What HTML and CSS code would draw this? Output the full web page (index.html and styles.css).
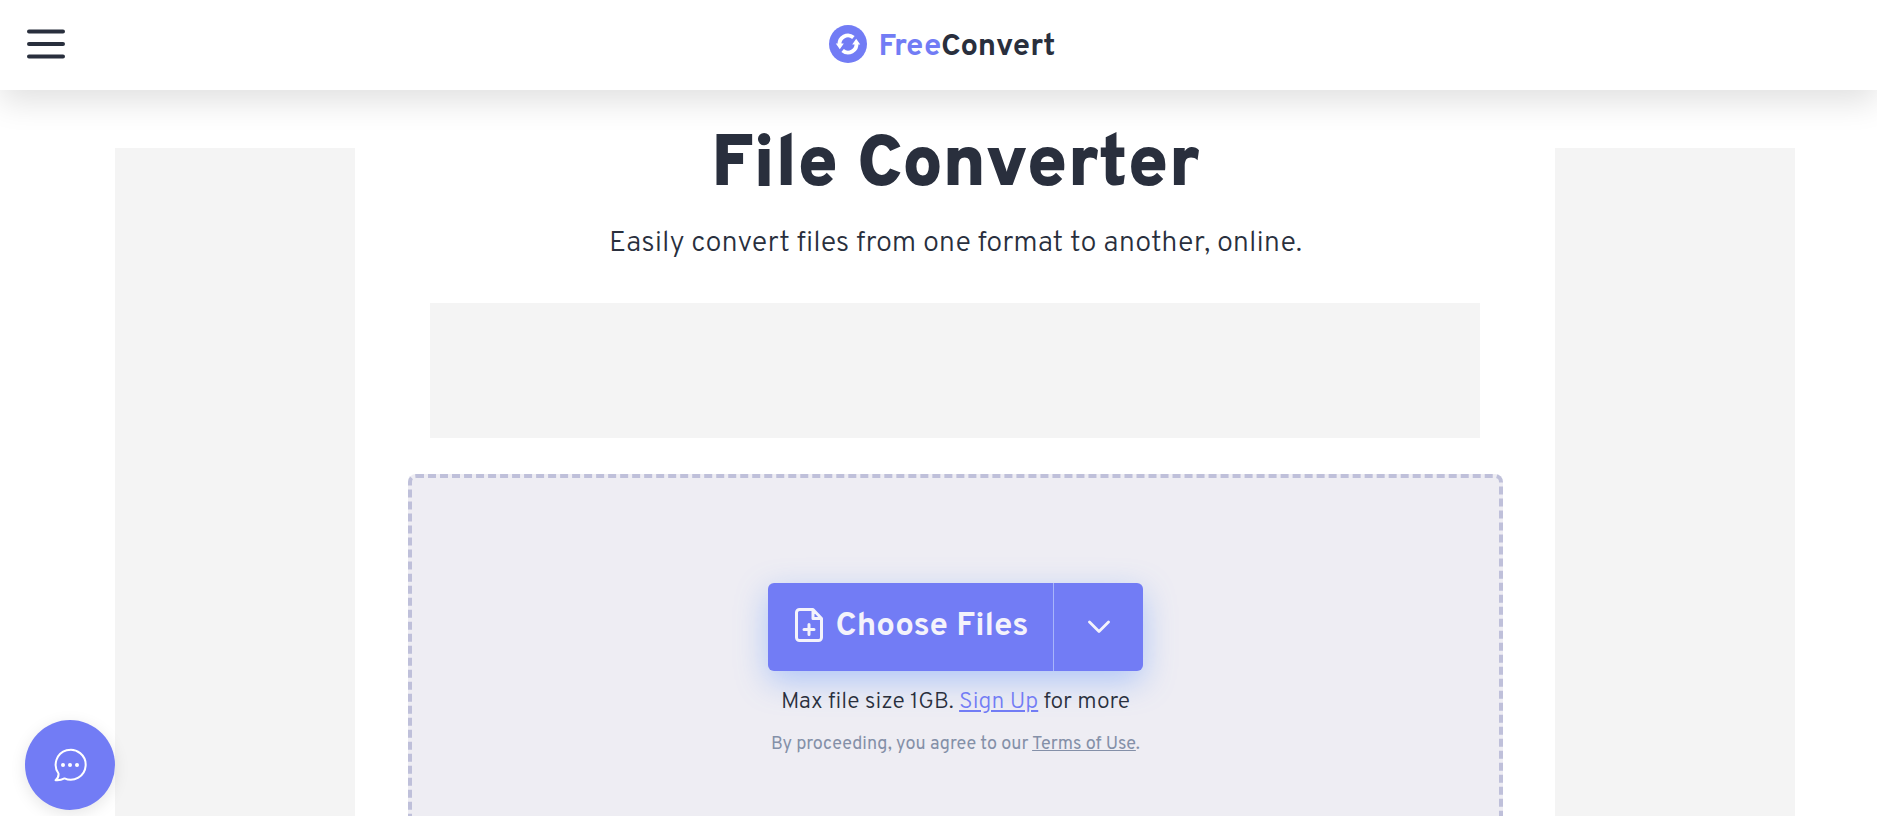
FILE: index.html
```html
<!DOCTYPE html>
<html lang="en">
<head>
<meta charset="utf-8">
<meta name="viewport" content="width=device-width, initial-scale=1">
<title>File Converter</title>
<link rel="stylesheet" href="styles.css">
</head>
<body>
<header class="header">
  <button class="menu" type="button" aria-label="Menu">
    <svg width="38" height="32" viewBox="0 0 38 32" fill="none" stroke="currentColor" stroke-width="4" stroke-linecap="round"><path d="M2 3.500h34M2 16h34M2 28.500h34"/></svg>
  </button>
  <a class="logo" href="#">
    <svg width="38" height="38" viewBox="0 0 38 38"><circle cx="19" cy="19" r="19" fill="#727cf5"/><g fill="none" stroke="#fff" stroke-width="3.800"><path d="M10.600 20A8.400 8.400 0 0 1 24.400 12.500"/><path d="M27.400 18A8.400 8.400 0 0 1 13.600 25.500"/></g><path fill="#fff" d="M6.800 18.600h8l-4 5.600zM31.200 19.400h-8l4-5.600z"/></svg>
    <span class="brand"><span class="brand-free">Free</span>Convert</span>
  </a>
</header>
<main class="page">
  <aside class="side-ad"></aside>
  <section class="content">
    <h1 class="title">File Converter</h1>
    <p class="subtitle">Easily convert files from one format to another, online.</p>
    <div class="banner-ad"></div>
    <div class="dropzone">
      <div class="picker">
        <button class="choose" type="button">
          <svg width="28" height="34" viewBox="0 0 28 34" fill="none" stroke="currentColor" stroke-width="3" stroke-linecap="round" stroke-linejoin="round"><path d="M18 1.500H4.500a3 3 0 0 0-3 3v25a3 3 0 0 0 3 3h19a3 3 0 0 0 3-3V10.500zM18 1.500v9h8.500M14 16.500v10M9 21.500h10"/></svg>
          <span class="choose-label">Choose Files</span>
        </button>
        <button class="more" type="button" aria-label="More sources">
          <svg width="22" height="14" viewBox="0 0 22 14" fill="none" stroke="currentColor" stroke-width="2.800" stroke-linecap="round" stroke-linejoin="round"><path d="M1.500 2l9.500 9.500L20.500 2"/></svg>
        </button>
      </div>
      <p class="limit">Max file size 1GB. <a href="#">Sign Up</a> for more</p>
      <p class="terms">By proceeding, you agree to our <a href="#">Terms of Use</a>.</p>
    </div>
  </section>
  <aside class="side-ad"></aside>
</main>
<button class="chat" type="button" aria-label="Chat">
  <svg width="34" height="34" viewBox="0 0 34 34" fill="none" stroke="currentColor" stroke-width="2" stroke-linecap="round" stroke-linejoin="round"><path d="M5.500 25.500A15 15 0 1 1 11.500 30.400C8.500 32 5.500 32.600 2.500 32.200C4.800 30.500 5.800 28.500 5.500 25.500z"/><g fill="currentColor" stroke="none"><circle cx="10" cy="17" r="2"/><circle cx="17" cy="17" r="2"/><circle cx="24" cy="17" r="2"/></g></svg>
</button>
</body>
</html>
```
FILE: styles.css
```css
* { box-sizing: border-box; }
body {
  margin: 0;
  height: 100vh;
  overflow: hidden;
  display: flex;
  flex-direction: column;
  background: #fff;
  color: #292f3d;
  font-family: Overpass, Roboto, "Liberation Sans", sans-serif;
}
button { border: 0; padding: 0; background: none; color: inherit; font: inherit; cursor: pointer; }
svg { display: block; flex: none; }
h1, p { margin: 0; }
.header {
  display: grid;
  grid-template-columns: 1fr auto 1fr;
  align-items: center;
  height: 90px;
  flex: none;
  padding: 0 20px 2px 27px;
  box-shadow: 0 12px 32px rgba(0, 0, 0, 0.12);
}
.menu { justify-self: start; }
.logo {
  display: flex;
  align-items: center;
  gap: 12px;
  color: inherit;
  text-decoration: none;
}
.brand { padding-top: 8px; font-size: 31px; line-height: 40px; font-weight: 700; }
.brand-free { color: #727cf5; }
.page {
  flex: 1;
  min-height: 0;
  display: flex;
  padding: 0 82px 0 115px;
}
.side-ad { flex: none; width: 240px; margin-top: 58px; background: #f4f4f4; }
.content {
  flex: 1;
  display: flex;
  flex-direction: column;
  padding: 33px 52px 0 53px;
  text-align: center;
}
.title { font-size: 72px; line-height: 88px; font-weight: 900; }
.subtitle { margin-top: 13px; font-size: 29px; line-height: 40px; font-weight: 300; }
.banner-ad { flex: none; height: 135px; margin: 39px 23px 36px 22px; background: #f4f4f4; }
.dropzone {
  flex: 1;
  min-height: 360px;
  display: flex;
  flex-direction: column;
  align-items: center;
  padding-top: 105px;
  border: 4px dashed #bfc0da;
  border-radius: 8px;
  background: #eeedf3;
}
.picker {
  display: flex;
  height: 88px;
  border-radius: 6px;
  background: #727cf5;
  color: #f4f3fb;
  box-shadow: 0 10px 32px rgba(80, 140, 255, 0.4);
}
.choose {
  display: flex;
  align-items: center;
  gap: 13px;
  padding: 0 25px 4px 27px;
  font-size: 33px;
  font-weight: 700;
}
.choose-label { padding-top: 3px; }
.more {
  display: flex;
  align-items: center;
  justify-content: center;
  width: 90px;
  border-left: 1px solid #a9b5fa;
}
.limit { margin-top: 16px; font-size: 23px; line-height: 32px; font-weight: 300; }
.limit a { color: #727cf5; }
.terms { margin-top: 14px; font-size: 18px; line-height: 24px; color: #8490a8; }
.terms a { color: inherit; }
.chat {
  position: fixed;
  left: 25px;
  bottom: 6px;
  display: flex;
  align-items: center;
  justify-content: center;
  width: 90px;
  height: 90px;
  border-radius: 50%;
  background: #727cf5;
  color: #fff;
  box-shadow: 0 4px 16px rgba(0, 0, 0, 0.1);
}
```
